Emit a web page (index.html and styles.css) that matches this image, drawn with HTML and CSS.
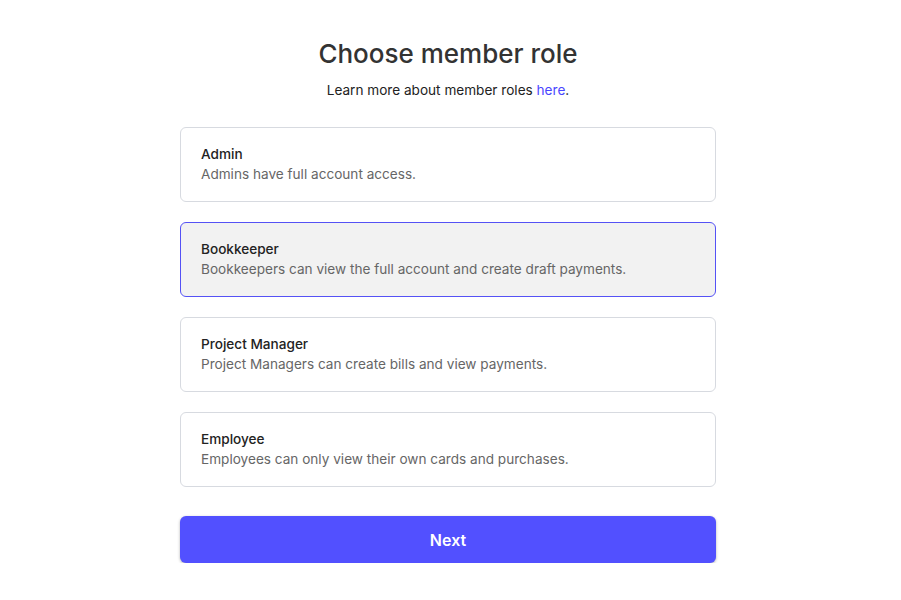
FILE: index.html
```html
<!DOCTYPE html>
<html lang="en">

<head>
    <meta charset="UTF-8" />
    <meta name="viewport" content="width=device-width, initial-scale=1.0" />
    <title>Choose member role</title>
    <link rel="stylesheet" href="styles.css">
</head>

<body>
    <div id="role-picker">
        <h1>Choose member role</h1>
        <p class="subtitle">Learn more about member roles <a href="#">here</a>.</p>

        <div class="role-list">
            <div class="role-card">
                <div class="role-name">Admin</div>
                <div class="role-desc">Admins have full account access.</div>
            </div>
            <div class="role-card selected">
                <div class="role-name">Bookkeeper</div>
                <div class="role-desc">Bookkeepers can view the full account and create draft payments.</div>
            </div>
            <div class="role-card">
                <div class="role-name">Project Manager</div>
                <div class="role-desc">Project Managers can create bills and view payments.</div>
            </div>
            <div class="role-card">
                <div class="role-name">Employee</div>
                <div class="role-desc">Employees can only view their own cards and purchases.</div>
            </div>
        </div>

        <button class="next-btn">Next</button>
    </div>
</body>

</html>
```

FILE: styles.css
```css
body {
    margin: 0;
    padding: 0 5px 0 0;
    font-family: Inter, "Noto Sans", sans-serif;
    background-color: #fff;
    color: #333;
}

#role-picker {
    width: 536px;
    margin: 0 auto;
    padding-top: 36px;
}

#role-picker h1 {
    margin: 0;
    font-size: 26px;
    line-height: 36px;
    font-weight: 500;
    text-align: center;
    color: #333;
}

.subtitle {
    margin: 8px 0 0;
    font-size: 13.6px;
    line-height: 20px;
    text-align: center;
    color: #222;
}

.subtitle a {
    color: #4a45ff;
    text-decoration: none;
}

.role-list {
    margin-top: 27px;
    display: flex;
    flex-direction: column;
    gap: 20px;
}

.role-card {
    border: 1px solid #d7dae0;
    border-radius: 6px;
    padding: 16px 20px 17px;
    background-color: #fff;
}

.role-card.selected {
    border-color: #5552f5;
    background-color: #f2f2f2;
}

.role-name {
    font-size: 13.6px;
    line-height: 20px;
    font-weight: 500;
    color: #222;
}

.role-desc {
    font-size: 13.6px;
    line-height: 20px;
    color: #666;
}

.next-btn {
    display: block;
    width: 100%;
    height: 47px;
    margin-top: 29px;
    border: none;
    border-radius: 6px;
    background-color: #5250ff;
    color: #fff;
    font-family: inherit;
    font-size: 16px;
    font-weight: 600;
    box-shadow: 0 1px 3px rgba(0, 0, 0, 0.3);
    cursor: pointer;
}
```
